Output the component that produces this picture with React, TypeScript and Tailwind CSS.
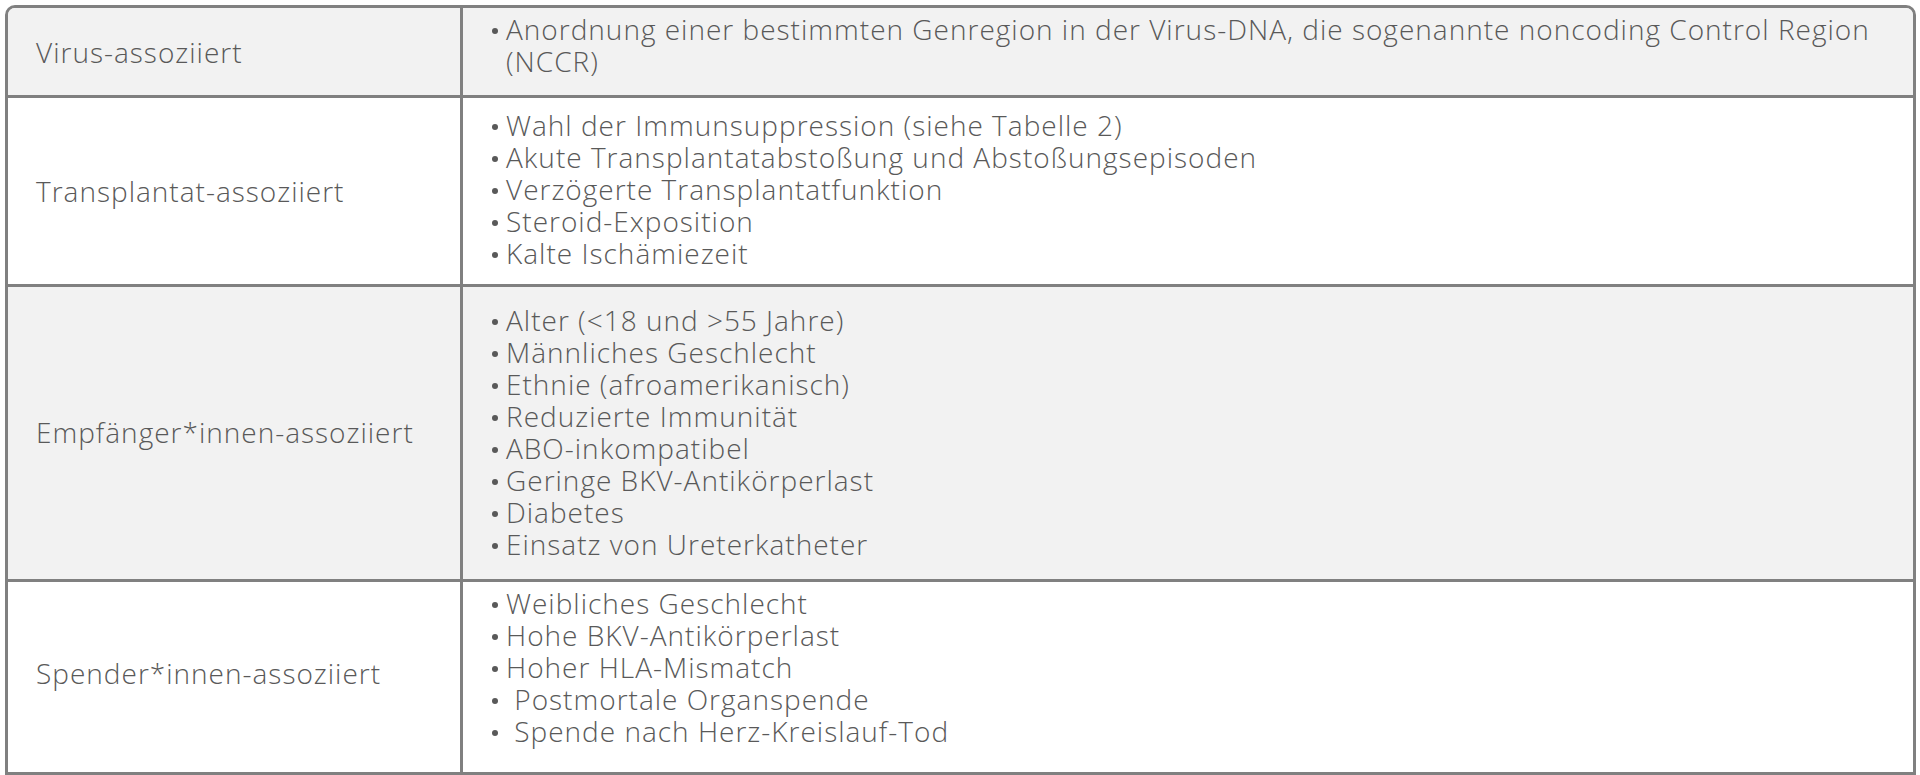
const rows = [
  {
    label: "Virus-assoziiert",
    bg: "bg-[#f2f2f2]",
    h: "h-[87px]",
    labelPad: "",
    listPad: "pb-[13px]",
    items: [
      "Anordnung einer bestimmten Genregion in der Virus-DNA, die sogenannte noncoding Control Region (NCCR)",
    ],
  },
  {
    label: "Transplantat-assoziiert",
    bg: "bg-white",
    h: "h-[189px]",
    labelPad: "",
    listPad: "pb-[4px]",
    items: [
      "Wahl der Immunsuppression (siehe Tabelle 2)",
      "Akute Transplantatabstoßung und Abstoßungsepisoden",
      "Verzögerte Transplantatfunktion",
      "Steroid-Exposition",
      "Kalte Ischämiezeit",
    ],
  },
  {
    label: "Empfänger*innen-assoziiert",
    bg: "bg-[#f2f2f2]",
    h: "h-[295px]",
    labelPad: "pb-[3px]",
    listPad: "pb-[2px]",
    items: [
      "Alter (<18 und >55 Jahre)",
      "Männliches Geschlecht",
      "Ethnie (afroamerikanisch)",
      "Reduzierte Immunität",
      "ABO-inkompatibel",
      "Geringe BKV-Antikörperlast",
      "Diabetes",
      "Einsatz von Ureterkatheter",
    ],
  },
  {
    label: "Spender*innen-assoziiert",
    bg: "bg-white",
    h: "h-[193px]",
    labelPad: "pb-[8px]",
    listPad: "pb-[21px]",
    items: [
      "Weibliches Geschlecht",
      "Hohe BKV-Antikörperlast",
      "Hoher HLA-Mismatch",
      "\u00a0Postmortale Organspende",
      "\u00a0Spende nach Herz-Kreislauf-Tod",
    ],
  },
];

export default function App() {
  return (
    <div className="min-h-screen bg-white pt-[5px] pl-[5px] font-['Open_Sans','Liberation_Sans',sans-serif] font-light text-[28px] leading-[32px] tracking-[1px] text-[#595959]">
      <div className="w-[1911px] overflow-hidden rounded-t-[10px] border-[3px] border-[#808080]">
        {rows.map((row, i) => (
          <div
            key={row.label}
            className={`grid grid-cols-[455px_1fr] ${row.bg} ${row.h} ${i > 0 ? "border-t-[3px] border-[#808080]" : ""}`}
          >
            <div className={`flex items-center border-r-[3px] border-[#808080] pl-[28px] ${row.labelPad}`}>
              {row.label}
            </div>
            <ul className={`flex flex-col justify-center pl-[29px] pr-[20px] ${row.listPad}`}>
              {row.items.map((item) => (
                <li key={item} className="flex items-start">
                  <span className="mt-[15px] mr-[8px] h-[6px] w-[6px] shrink-0 rounded-full bg-[#595959]" />
                  <span>{item}</span>
                </li>
              ))}
            </ul>
          </div>
        ))}
      </div>
    </div>
  );
}
